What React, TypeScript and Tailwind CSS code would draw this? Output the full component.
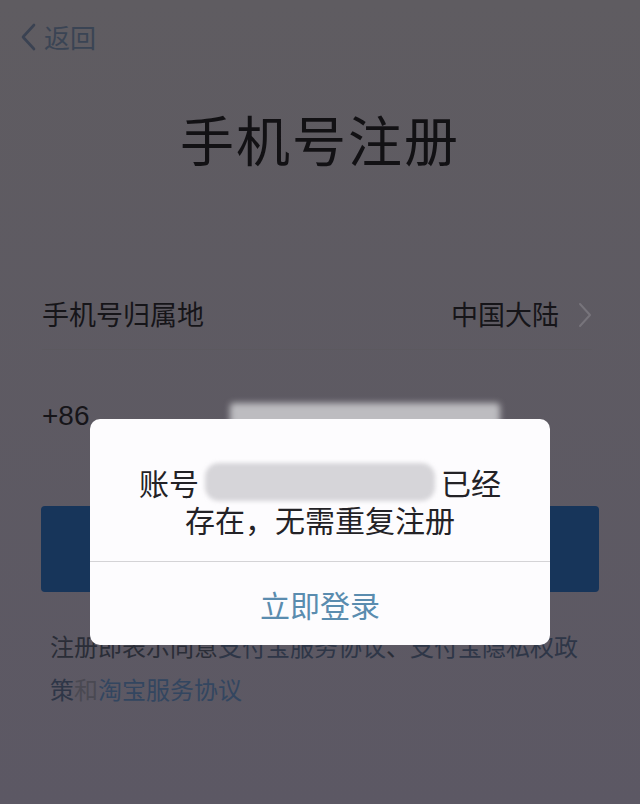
export default function App() {
  return (
    <div className="relative w-[640px] h-[804px] overflow-hidden bg-gradient-to-b from-[#5f5c61] to-[#5c5864] font-['Noto_Sans_CJK_SC',sans-serif]">
      {/* header */}
      <div className="flex items-center gap-[8px] pl-[20px] pt-[22px] h-[52px]">
        <svg width="16" height="28" viewBox="0 0 16 28" fill="none">
          <path d="M14 2 L3 14 L14 26" stroke="#3a4252" strokeWidth="2.6" strokeLinecap="round" strokeLinejoin="round" />
        </svg>
        <span className="text-[26px] leading-none text-[#3a4454]">返回</span>
      </div>

      <h1 className="mt-[60px] text-center text-[54px] leading-none tracking-[2px] text-[#121114]">手机号注册</h1>

      {/* region row */}
      <div className="ml-[42px] mr-[48px] mt-[114px] h-[70px] flex items-center justify-between border-b border-[#5c595f]">
        <span className="text-[27px] text-[#161519]">手机号归属地</span>
        <div className="flex items-center gap-[19px]">
          <span className="text-[27px] text-[#161519]">中国大陆</span>
          <svg width="14" height="26" viewBox="0 0 14 26" fill="none">
            <path d="M2 2 L12 13 L2 24" stroke="#77747b" strokeWidth="2" strokeLinecap="round" strokeLinejoin="round" />
          </svg>
        </div>
      </div>

      {/* phone row */}
      <div className="mx-[42px] mt-[30px] h-[72px] flex items-center">
        <span className="text-[28px] text-[#161519] font-['Liberation_Sans',sans-serif]">+86</span>
        <div className="ml-[140px] w-[270px] h-[26px] bg-[#bdbcc0] blur-[3px] rounded-[4px]" />
      </div>

      {/* submit button */}
      <div className="mx-[41px] mt-[54px] h-[86px] rounded-[4px] bg-[#17355a]" />

      {/* agreement */}
      <p className="px-[50px] mt-[32px] text-[24px] leading-[43px] text-[#2a2d37]">
        注册即表示同意<span className="text-[#2e3647]">支付宝服务协议</span>、<span className="text-[#2e3647]">支付宝隐私权政策</span><span className="text-[#4a4952]">和</span><span className="text-[#334660]">淘宝服务协议</span>
      </p>

      {/* dialog */}
      <div className="absolute left-[90px] top-[419px] w-[460px] h-[226px] rounded-[10px] bg-[#fdfcfe] flex flex-col">
        <div className="h-[142px] pt-[44px] flex flex-col items-center text-[30px] leading-[36px] text-[#232226]">
          <div className="flex items-center gap-[6px]">
            <span>账号</span>
            <div className="w-[230px] h-[38px] rounded-[14px] bg-[#d6d5d9] blur-[2px]" />
            <span>已经</span>
          </div>
          <div>存在，无需重复注册</div>
        </div>
        <div className="flex-1 border-t border-[#d4d3d6] flex items-center justify-center">
          <span className="text-[30px] leading-none text-[#5a8caf]">立即登录</span>
        </div>
      </div>
    </div>
  );
}
